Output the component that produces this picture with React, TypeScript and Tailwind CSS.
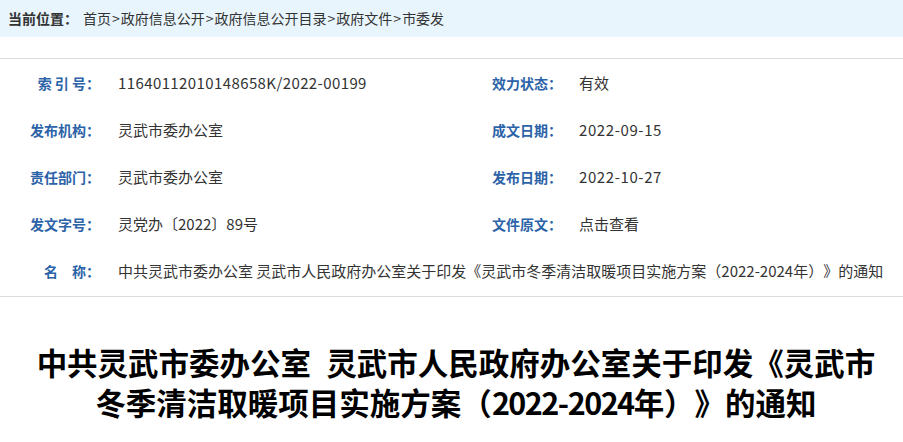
import type { ReactNode } from "react"

const font = { fontFamily: '"Noto Sans CJK SC", "Microsoft YaHei", sans-serif' }

const crumbs = ["首页", "政府信息公开", "政府信息公开目录", "政府文件", "市委发"]

const Label = ({ children, className }: { children: ReactNode; className?: string }) => (
  <div className={`shrink-0 text-[14px] font-bold text-[#2c63a8] ${className || ""}`}>{children}</div>
)

const Value = ({ children, className }: { children: ReactNode; className?: string }) => (
  <div className={`text-[15px] text-[#333] whitespace-nowrap ${className || ""}`}>{children}</div>
)

interface MetaRow {
  label: string
  value: string
  label2: string
  value2: string
  // numeric values get a touch of tracking
  num?: boolean
  num2?: boolean
}

const rows: MetaRow[] = [
  { label: "索 引 号：", value: "11640112010148658K/2022-00199", num: true, label2: "效力状态：", value2: "有效" },
  { label: "发布机构：", value: "灵武市委办公室", label2: "成文日期：", value2: "2022-09-15", num2: true },
  { label: "责任部门：", value: "灵武市委办公室", label2: "发布日期：", value2: "2022-10-27", num2: true },
  { label: "发文字号：", value: "灵党办〔2022〕89号", label2: "文件原文：", value2: "点击查看" },
]

export default function App() {
  return (
    <div className="w-[903px] h-[442px] overflow-hidden bg-white [text-spacing-trim:space-all]" style={font}>
      {/* breadcrumb */}
      <div className="flex h-[37px] items-center bg-[#e8f5fd] pl-[8px] text-[14px] text-[#333]">
        <span className="font-bold">当前位置：</span>
        <span className="ml-[5px]">
          {crumbs.map((c, i) => (
            <span key={c}>
              {i > 0 && <span className="px-[1px]">&gt;</span>}
              {c}
            </span>
          ))}
        </span>
      </div>

      {/* document info table */}
      <div className="mt-[21px] border-y border-[#dcdcdc] py-[1px]">
        {rows.map((r) => (
          <div key={r.label} className="flex h-[47px] items-center">
            <Label className="w-[100px] text-right">{r.label}</Label>
            <Value className={`w-[392px] pl-[18px] ${r.num ? "tracking-[0.4px]" : ""}`}>{r.value}</Value>
            <Label className="w-[87px]">{r.label2}</Label>
            <Value className={r.num2 ? "tracking-[0.6px]" : ""}>{r.value2}</Value>
          </div>
        ))}
        <div className="flex h-[47px] items-center">
          <Label className="w-[100px] text-right">名　称：</Label>
          <Value className="pl-[18px]">
            中共灵武市委办公室 灵武市人民政府办公室关于印发《灵武市冬季清洁取暖项目实施方案（2022-2024年）》的通知
          </Value>
        </div>
      </div>

      {/* title */}
      <h1 className="mt-[45px] pl-[9px] text-center text-[30.5px] font-bold leading-[40px] text-black">
        中共灵武市委办公室{"\u2002"}灵武市人民政府办公室关于印发《灵武市
        <br />
        冬季清洁取暖项目实施方案（<span className="tracking-[-1.5px]">2022-2024</span>年）》的通知
      </h1>
    </div>
  )
}
